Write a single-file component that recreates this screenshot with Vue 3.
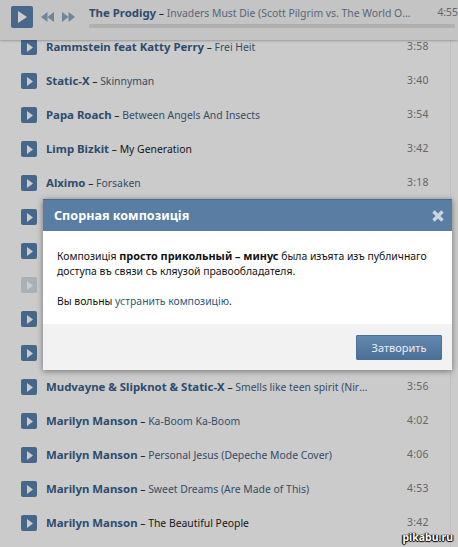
<script setup>
const tracks = [
  { artist: "Rammstein feat Katty Perry", title: "Frei Heit", time: "3:58" },
  { artist: "Static-X", title: "Skinnyman", time: "3:40" },
  { artist: "Papa Roach", title: "Between Angels And Insects", time: "3:54" },
  { artist: "Limp Bizkit", title: "My Generation", time: "3:42", dark: true },
  { artist: "Alximo", title: "Forsaken", time: "3:18" },
  // these rows sit behind the dialog
  {},
  {},
  { removed: true },
  {},
  {},
  { artist: "Mudvayne & Slipknot & Static-X", title: "Smells like teen spirit (Nirvana Cover)", time: "3:56" },
  { artist: "Marilyn Manson", title: "Ka-Boom Ka-Boom", time: "4:02" },
  { artist: "Marilyn Manson", title: "Personal Jesus (Depeche Mode Cover)", time: "4:06" },
  { artist: "Marilyn Manson", title: "Sweet Dreams (Are Made of This)", time: "4:53" },
  { artist: "Marilyn Manson", title: "The Beautiful People", time: "3:42", dark: true },
];
</script>

<template>
  <div class="page">
    <header class="player">
      <button class="big-play" aria-label="Play">
        <svg width="9" height="12" viewBox="0 0 9 12"><path d="M0 0 L9 6 L0 12 Z" fill="#fff" /></svg>
      </button>
      <svg class="skip" width="13" height="10" viewBox="0 0 13 10"><path d="M6.5 0 V10 L0 5 Z M13 0 V10 L6.5 5 Z" /></svg>
      <svg class="skip" width="13" height="10" viewBox="0 0 13 10"><path d="M0 0 L6.5 5 L0 10 Z M6.5 0 L13 5 L6.5 10 Z" /></svg>
      <div class="now">
        <div class="now-top">
          <div class="now-name">
            <b>The Prodigy</b> <span class="dash">–</span> Invaders Must Die (Scott Pilgrim vs. The World OST)
          </div>
          <span class="now-time">4:55</span>
        </div>
        <div class="progress"></div>
      </div>
    </header>

    <ul class="list">
      <li v-for="(t, i) in tracks" :key="i" class="row">
        <span class="play" :class="{ off: t.removed }">
          <svg width="6" height="9" viewBox="0 0 6 9"><path d="M0 0 L6 4.5 L0 9 Z" fill="#fff" /></svg>
        </span>
        <div class="name" :class="{ dark: t.dark }">
          <template v-if="t.artist"><b>{{ t.artist }}</b> <span class="dash">–</span> {{ t.title }}</template>
        </div>
        <span class="time">{{ t.time }}</span>
      </li>
    </ul>

    <div class="shade"></div>

    <section class="dialog">
      <div class="dialog-head">
        <span>Спорная композиція</span>
        <svg width="12" height="12" viewBox="0 0 12 12"><path d="M1.5 1.5 L10.5 10.5 M10.5 1.5 L1.5 10.5" stroke="#c9d6e4" stroke-width="3.4" /></svg>
      </div>
      <div class="dialog-body">
        <p>Композиція <b>просто прикольный – минус</b> была изъята изъ публичнаго доступа въ связи съ кляузой правообладателя.</p>
        <p>Вы вольны <a>устранить композицію</a>.</p>
      </div>
      <div class="dialog-foot">
        <button class="close-btn">Затворить</button>
      </div>
    </section>

    <span class="mark">pikabu.ru</span>
  </div>
</template>

<style>
html, body { margin: 0; background: #fff; }
</style>

<style scoped>
.page {
  position: relative;
  width: 458px;
  height: 547px;
  overflow: hidden;
  background: #fefefe;
  font-family: "Noto Sans", Tahoma, sans-serif;
  font-size: 10.4px;
}
b { font-size: 11.4px; }

/* player */
.player {
  position: relative;
  z-index: 1;
  height: 40px;
  box-sizing: border-box;
  display: flex;
  align-items: flex-start;
  padding: 6px 0 0 11px;
  background: #f5f5f5;
  box-shadow: 0 1px 2px rgba(0, 0, 0, 0.25);
}
.big-play {
  width: 22px;
  height: 22px;
  padding: 0 0 0 1px;
  border: 0;
  border-radius: 2px;
  background: #5a83ae;
  display: flex;
  align-items: center;
  justify-content: center;
}
.skip { fill: #8aa5c2; margin: 6px 0 0 8px; }
.skip + .skip { margin-left: 8px; }
.now { flex: 1; margin-left: 14px; min-width: 0; }
.now-top { display: flex; height: 18px; line-height: 13px; }
.now-name {
  width: 323px;
  white-space: nowrap;
  overflow: hidden;
  text-overflow: ellipsis;
  color: #6f8198;
}
.now-name b { color: #3b6189; }
.now-time { margin-left: 26px; color: #808080; }
.dash { color: #222; }
.progress { height: 4px; margin-right: 3px; background: #dcdcdc; }

/* list */
.list {
  list-style: none;
  margin: -10px 0 0;
  padding: 0 0 0 21px;
  width: 429px;
  height: 517px;
  box-sizing: content-box;
  border-right: 1px solid #efefef;
}
.row { display: flex; align-items: center; height: 34px; }
.play {
  flex: none;
  width: 16px;
  height: 16px;
  border-radius: 2px;
  background: #5981ad;
  display: flex;
  align-items: center;
  justify-content: center;
  padding-left: 1px;
  box-sizing: border-box;
}
.play.off { background: #d3dce6; }
.name {
  width: 326px;
  margin: 0 0 1px 9px;
  white-space: nowrap;
  overflow: hidden;
  text-overflow: ellipsis;
  color: #44607e;
}
.name b { color: #36608a; }
.name.dark { color: #222; }
.time { margin: 0 0 2px 35px; color: #808080; letter-spacing: 0.3px; }

.shade {
  position: absolute;
  inset: 0;
  z-index: 2;
  background: rgba(0, 0, 0, 0.2);
}

/* dialog */
.dialog {
  position: absolute;
  z-index: 3;
  left: 43px;
  top: 199px;
  width: 409px;
  box-shadow: 0 1px 6px rgba(0, 0, 0, 0.45);
}
.dialog-head {
  height: 32px;
  box-sizing: border-box;
  padding: 0 8px 0 11px;
  display: flex;
  align-items: center;
  justify-content: space-between;
  background: #5a7da4;
  border-top: 1px solid #4a6b92;
  color: #fff;
}
.dialog-head span {
  font-size: 12.6px;
  font-weight: bold;
}
.dialog-body {
  height: 93px;
  box-sizing: border-box;
  padding: 17px 14px 0;
  background: #fff;
  color: #111;
  font-size: 10.4px;
  line-height: 15px;
}
.dialog-body b { font-size: 10.9px; }
.dialog-body p { margin: 0 0 15px; }
.dialog-body a { color: #2b587a; }
.dialog-foot {
  height: 46px;
  box-sizing: border-box;
  padding: 11px 10px 0;
  display: flex;
  justify-content: flex-end;
  align-items: flex-start;
  background: #f2f2f2;
}
.close-btn {
  width: 86px;
  height: 25px;
  padding: 0;
  border: 1px solid #4d7097;
  border-radius: 1px;
  background: linear-gradient(#6389b0, #4b7098);
  color: #e9eff6;
  font: inherit;
  font-size: 11px;
}

.mark {
  position: absolute;
  z-index: 4;
  right: 5px;
  bottom: 3px;
  font-size: 10.5px;
  font-weight: bold;
  color: #fff;
  text-shadow: 0 0 1px #000, 1px 0 1px #000, -1px 0 1px #000, 0 1px 1px #000;
}
</style>
